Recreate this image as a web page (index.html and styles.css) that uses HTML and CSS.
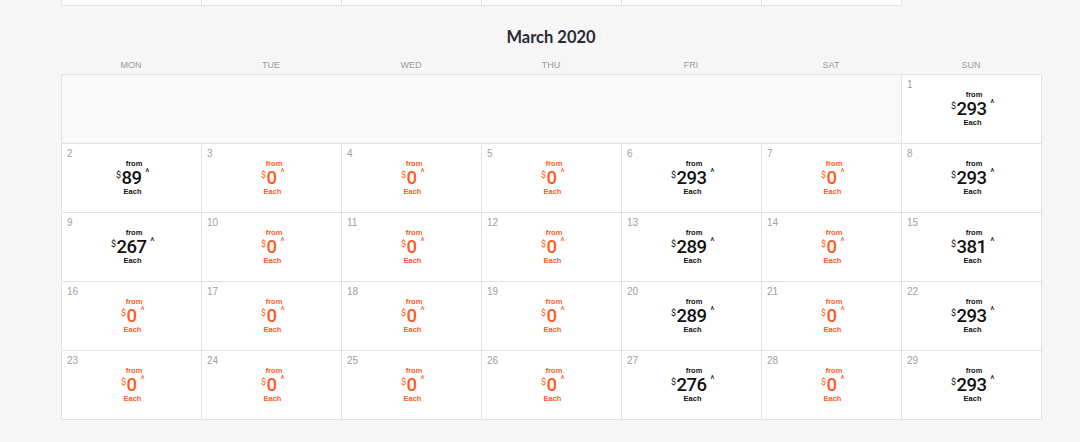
FILE: index.html
```html
<!DOCTYPE html>
<html>
<head>
<meta charset="utf-8">
<link rel="stylesheet" href="styles.css">
</head>
<body>
<div class="page">
  <div class="prev">
    <div class="pcell"></div><div class="pcell"></div><div class="pcell"></div>
    <div class="pcell"></div><div class="pcell"></div><div class="pcell"></div>
  </div>
  <h2 class="month">March 2020</h2>
  <div class="dows">
    <div>MON</div><div>TUE</div><div>WED</div><div>THU</div><div>FRI</div><div>SAT</div><div>SUN</div>
  </div>
  <div class="grid">
    <div class="blank"></div>
    <div class="cell"><span class="day">1</span><div class="fare"><span class="from">from</span><span class="price"><span class="cur">$</span>293<span class="caret">^</span></span><span class="each">Each</span></div></div>

    <div class="cell"><span class="day">2</span><div class="fare"><span class="from">from</span><span class="price"><span class="cur">$</span>89<span class="caret">^</span></span><span class="each">Each</span></div></div>
    <div class="cell"><span class="day">3</span><div class="fare zero"><span class="from">from</span><span class="price"><span class="cur">$</span>0<span class="caret">^</span></span><span class="each">Each</span></div></div>
    <div class="cell"><span class="day">4</span><div class="fare zero"><span class="from">from</span><span class="price"><span class="cur">$</span>0<span class="caret">^</span></span><span class="each">Each</span></div></div>
    <div class="cell"><span class="day">5</span><div class="fare zero"><span class="from">from</span><span class="price"><span class="cur">$</span>0<span class="caret">^</span></span><span class="each">Each</span></div></div>
    <div class="cell"><span class="day">6</span><div class="fare"><span class="from">from</span><span class="price"><span class="cur">$</span>293<span class="caret">^</span></span><span class="each">Each</span></div></div>
    <div class="cell"><span class="day">7</span><div class="fare zero"><span class="from">from</span><span class="price"><span class="cur">$</span>0<span class="caret">^</span></span><span class="each">Each</span></div></div>
    <div class="cell"><span class="day">8</span><div class="fare"><span class="from">from</span><span class="price"><span class="cur">$</span>293<span class="caret">^</span></span><span class="each">Each</span></div></div>

    <div class="cell"><span class="day">9</span><div class="fare"><span class="from">from</span><span class="price"><span class="cur">$</span>267<span class="caret">^</span></span><span class="each">Each</span></div></div>
    <div class="cell"><span class="day">10</span><div class="fare zero"><span class="from">from</span><span class="price"><span class="cur">$</span>0<span class="caret">^</span></span><span class="each">Each</span></div></div>
    <div class="cell"><span class="day">11</span><div class="fare zero"><span class="from">from</span><span class="price"><span class="cur">$</span>0<span class="caret">^</span></span><span class="each">Each</span></div></div>
    <div class="cell"><span class="day">12</span><div class="fare zero"><span class="from">from</span><span class="price"><span class="cur">$</span>0<span class="caret">^</span></span><span class="each">Each</span></div></div>
    <div class="cell"><span class="day">13</span><div class="fare"><span class="from">from</span><span class="price"><span class="cur">$</span>289<span class="caret">^</span></span><span class="each">Each</span></div></div>
    <div class="cell"><span class="day">14</span><div class="fare zero"><span class="from">from</span><span class="price"><span class="cur">$</span>0<span class="caret">^</span></span><span class="each">Each</span></div></div>
    <div class="cell"><span class="day">15</span><div class="fare"><span class="from">from</span><span class="price"><span class="cur">$</span>381<span class="caret">^</span></span><span class="each">Each</span></div></div>

    <div class="cell"><span class="day">16</span><div class="fare zero"><span class="from">from</span><span class="price"><span class="cur">$</span>0<span class="caret">^</span></span><span class="each">Each</span></div></div>
    <div class="cell"><span class="day">17</span><div class="fare zero"><span class="from">from</span><span class="price"><span class="cur">$</span>0<span class="caret">^</span></span><span class="each">Each</span></div></div>
    <div class="cell"><span class="day">18</span><div class="fare zero"><span class="from">from</span><span class="price"><span class="cur">$</span>0<span class="caret">^</span></span><span class="each">Each</span></div></div>
    <div class="cell"><span class="day">19</span><div class="fare zero"><span class="from">from</span><span class="price"><span class="cur">$</span>0<span class="caret">^</span></span><span class="each">Each</span></div></div>
    <div class="cell"><span class="day">20</span><div class="fare"><span class="from">from</span><span class="price"><span class="cur">$</span>289<span class="caret">^</span></span><span class="each">Each</span></div></div>
    <div class="cell"><span class="day">21</span><div class="fare zero"><span class="from">from</span><span class="price"><span class="cur">$</span>0<span class="caret">^</span></span><span class="each">Each</span></div></div>
    <div class="cell"><span class="day">22</span><div class="fare"><span class="from">from</span><span class="price"><span class="cur">$</span>293<span class="caret">^</span></span><span class="each">Each</span></div></div>

    <div class="cell"><span class="day">23</span><div class="fare zero"><span class="from">from</span><span class="price"><span class="cur">$</span>0<span class="caret">^</span></span><span class="each">Each</span></div></div>
    <div class="cell"><span class="day">24</span><div class="fare zero"><span class="from">from</span><span class="price"><span class="cur">$</span>0<span class="caret">^</span></span><span class="each">Each</span></div></div>
    <div class="cell"><span class="day">25</span><div class="fare zero"><span class="from">from</span><span class="price"><span class="cur">$</span>0<span class="caret">^</span></span><span class="each">Each</span></div></div>
    <div class="cell"><span class="day">26</span><div class="fare zero"><span class="from">from</span><span class="price"><span class="cur">$</span>0<span class="caret">^</span></span><span class="each">Each</span></div></div>
    <div class="cell"><span class="day">27</span><div class="fare"><span class="from">from</span><span class="price"><span class="cur">$</span>276<span class="caret">^</span></span><span class="each">Each</span></div></div>
    <div class="cell"><span class="day">28</span><div class="fare zero"><span class="from">from</span><span class="price"><span class="cur">$</span>0<span class="caret">^</span></span><span class="each">Each</span></div></div>
    <div class="cell"><span class="day">29</span><div class="fare"><span class="from">from</span><span class="price"><span class="cur">$</span>293<span class="caret">^</span></span><span class="each">Each</span></div></div>
  </div>
</div>
</body>
</html>
```
FILE: styles.css
```css
html, body {
  margin: 0;
  padding: 0;
  background: #f6f6f6;
  font-family: "Liberation Sans", Arial, sans-serif;
}
.page {
  width: 980px;
  margin-left: 61px;
}
.prev {
  display: grid;
  grid-template-columns: repeat(6, 140px);
  width: 840px;
  border-left: 1px solid #e2e2e2;
}
.pcell {
  height: 5px;
  background: #fff;
  border-right: 1px solid #e2e2e2;
  border-bottom: 1px solid #e2e2e2;
}
.month {
  margin: 21px 0 0;
  text-align: center;
  font-family: Lato, "Open Sans", sans-serif;
  font-weight: 700;
  font-size: 16.5px;
  line-height: 20px;
  color: #2b2b33;
}
.dows {
  display: grid;
  grid-template-columns: repeat(7, 140px);
  margin-top: 12px;
  height: 15px;
}
.dows div {
  text-align: center;
  font-size: 9px;
  line-height: 12px;
  color: #9a9a9a;
}
.grid {
  display: grid;
  grid-template-columns: repeat(7, 140px);
  grid-auto-rows: 69px;
  border-top: 1px solid #e2e2e2;
  border-left: 1px solid #e2e2e2;
}
.blank {
  grid-column: span 6;
  background: #f9f9f9;
  border-right: 1px solid #e2e2e2;
  border-bottom: 1px solid #e2e2e2;
}
.cell {
  background: #fff;
  border-right: 1px solid #e2e2e2;
  border-bottom: 1px solid #e2e2e2;
  display: flex;
  flex-direction: column;
  align-items: center;
}
.day {
  align-self: flex-start;
  margin: 4px 0 0 5px;
  font-size: 10px;
  line-height: 12px;
  color: #a0a0a0;
  height: 12px;
}
.fare {
  display: flex;
  flex-direction: column;
  align-items: center;
  margin-top: -1px;
  margin-left: 2px;
  color: #111;
}
.fare.zero {
  color: #ff5a22;
}
.from, .each {
  font-size: 7.5px;
  font-weight: 700;
  line-height: 9px;
}
.from {
  margin-left: 3px;
}
.price {
  font-family: Roboto, "Liberation Sans", sans-serif;
  font-size: 18.5px;
  line-height: 18px;
  font-weight: 500;
  letter-spacing: -0.6px;
  display: flex;
  align-items: flex-start;
  margin: 1px 0 0;
}
.cur {
  font-size: 9px;
  line-height: 10px;
  margin: 1px 1px 0 0;
  font-weight: 400;
}
.caret {
  font-size: 10px;
  line-height: 10px;
  margin: -1px 0 0 4px;
  font-weight: 400;
}
```
